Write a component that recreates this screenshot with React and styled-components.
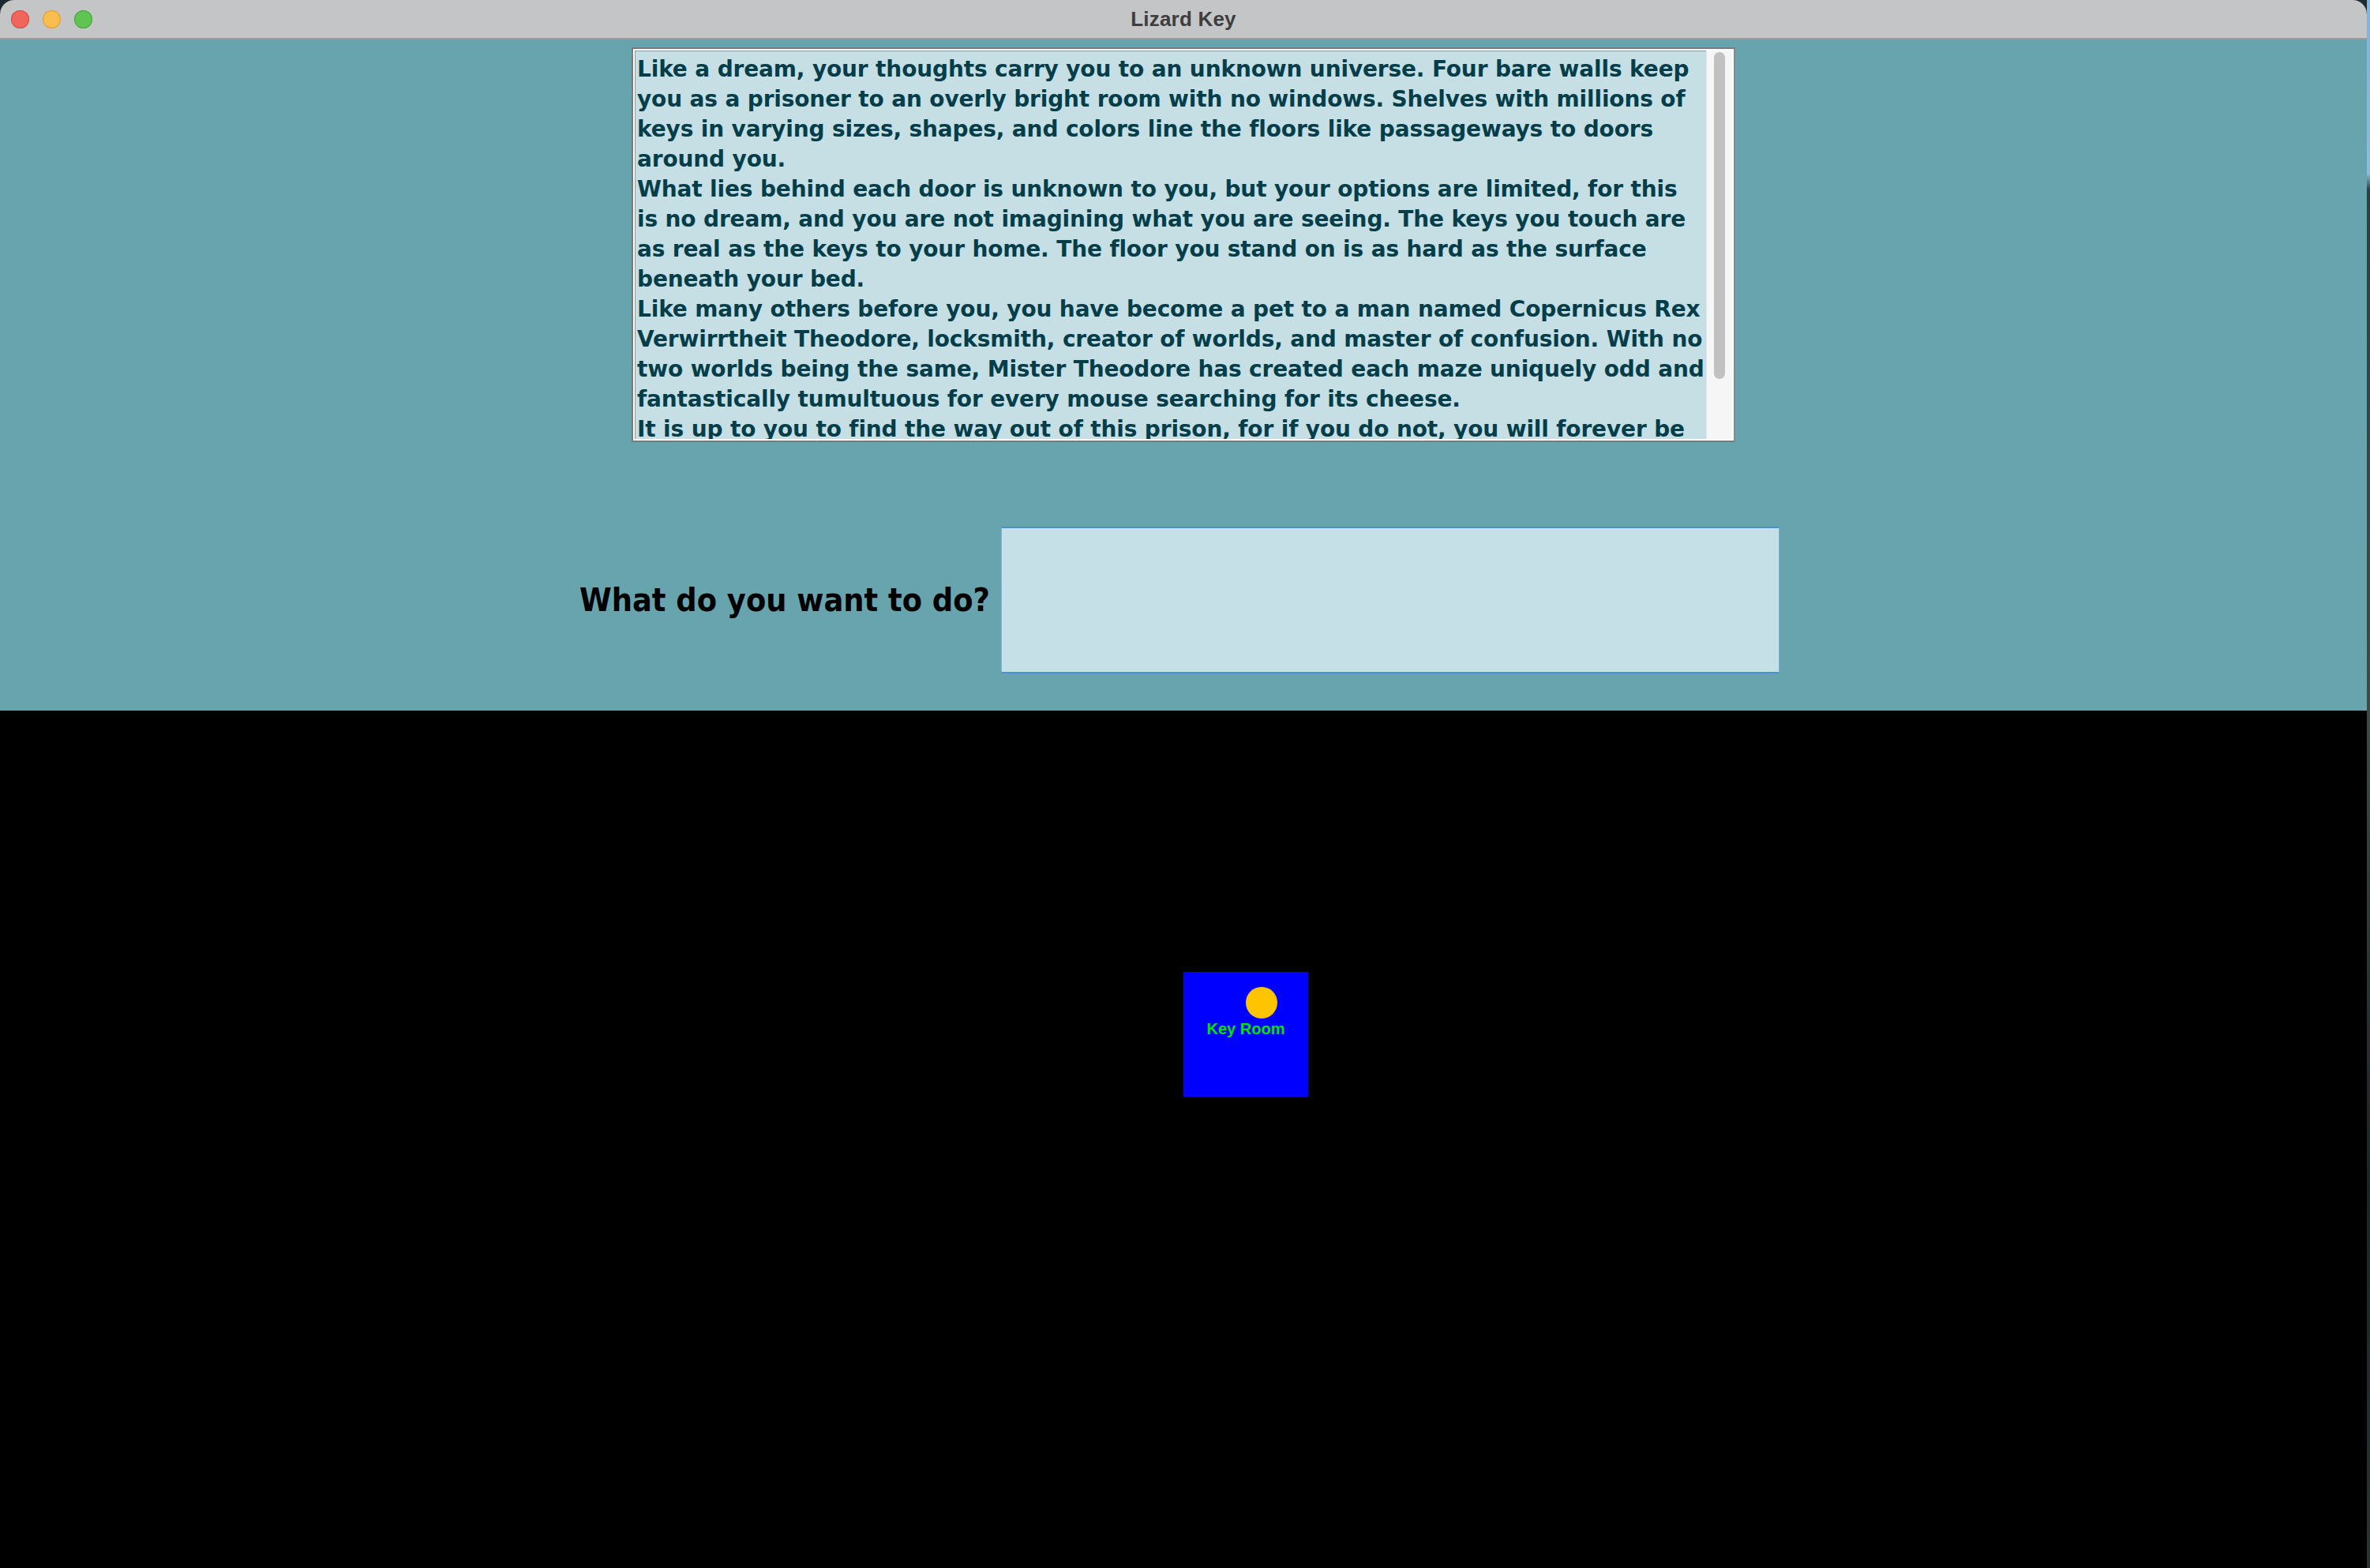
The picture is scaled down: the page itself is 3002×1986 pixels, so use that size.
import React from "react";
import styled, { createGlobalStyle } from "styled-components";

const GlobalStyle = createGlobalStyle`
  html, body { margin: 0; padding: 0; background: #1d2b30; }
  #root { width: 3002px; height: 1986px; }
`;

const Screen = styled.div`
  display: flex;
  width: 3002px;
  height: 1986px;
  overflow: hidden;
`;

const Window = styled.div`
  width: 2998px;
  height: 1986px;
  display: flex;
  flex-direction: column;
  border-top-left-radius: 18px;
  border-top-right-radius: 18px;
  overflow: hidden;
  background: #000;
`;

const Desktop = styled.div`
  flex: 1;
  background: linear-gradient(
    180deg,
    #7fb4e0 0px,
    #8bbbe0 220px,
    #2e3f44 240px,
    #3b4c46 900px,
    #1a2426 1500px,
    #2a3433 1986px
  );
`;

const TitleBar = styled.div`
  height: 48px;
  flex: none;
  background: #c4c5c7;
  border-bottom: 2px solid #9c9c9e;
  display: grid;
  grid-template-columns: 1fr auto 1fr;
  align-items: center;
  padding: 0 14px;
`;

const Lights = styled.div`
  display: flex;
  gap: 17px;
  align-items: center;
`;

const Light = styled.span`
  width: 23px;
  height: 23px;
  border-radius: 50%;
  background: ${(p) => p.$fill};
  box-shadow: inset 0 0 0 1px ${(p) => p.$edge};
`;

const Title = styled.div`
  font-family: "Liberation Sans", Arial, sans-serif;
  font-weight: 700;
  font-size: 26px;
  color: #3e3e3e;
  letter-spacing: 0.2px;
`;

const Console = styled.div`
  height: 850px;
  flex: none;
  background: #67a4ae;
  display: flex;
  flex-direction: column;
  align-items: center;
  padding-top: 10px;
  box-sizing: border-box;
`;

const StoryBox = styled.div`
  width: 1398px;
  height: 500px;
  box-sizing: border-box;
  border: 2px solid #7a7a7a;
  border-right-color: #8a8a8a;
  background: #ffffff;
  padding: 2px;
  display: flex;
`;

const StoryPane = styled.div`
  flex: 1;
  overflow: hidden;
  background: #c5dfe5;
  border-top: 1px solid #8a9a9e;
  border-left: 1px solid #8a9a9e;
  padding: 4px 0 0 2px;
  font-family: "DejaVu Sans", "Liberation Sans", sans-serif;
  font-weight: 700;
  font-size: 28px;
  letter-spacing: -0.15px;
  line-height: 38px;
  color: #023e4a;
`;

const StoryLine = styled.div`
  white-space: nowrap;
`;

const ScrollTrack = styled.div`
  width: 33px;
  flex: none;
  background: #f6f6f6;
  border-left: 1px solid #e4e4e4;
  display: flex;
  justify-content: center;
  padding-top: 2px;
  box-sizing: border-box;
`;

const ScrollThumb = styled.div`
  width: 14px;
  height: 414px;
  border-radius: 7px;
  background: #c1c1c1;
`;

const PromptRow = styled.div`
  margin-top: 107px;
  margin-right: 10px;
  display: flex;
  align-items: center;
  gap: 14px;
`;

const Prompt = styled.label`
  font-family: "DejaVu Sans Condensed", "DejaVu Sans", sans-serif;
  font-stretch: condensed;
  font-weight: 700;
  font-size: 41px;
  color: #000;
`;

const CommandInput = styled.div`
  width: 986px;
  height: 186px;
  box-sizing: border-box;
  background: #c5e0e6;
  border: 1px solid #7fb3da;
  border-top: 2px solid #4a8fcf;
  border-bottom: 2px solid #4a8fcf;
`;

const MapCanvas = styled.div`
  flex: 1;
  background: #000;
  position: relative;
`;

const RoomNode = styled.div`
  position: absolute;
  left: ${(p) => p.$x}px;
  top: ${(p) => p.$y}px;
  width: 158px;
  height: 158px;
  background: #0000ff;
`;

const RoomLabel = styled.div`
  position: absolute;
  left: 0;
  right: 0;
  top: 61px;
  text-align: center;
  font-family: "Liberation Sans", Arial, sans-serif;
  font-weight: 700;
  font-size: 20px;
  color: #00e000;
`;

const PlayerDot = styled.div`
  position: absolute;
  left: 79px;
  top: 19px;
  width: 40px;
  height: 40px;
  border-radius: 50%;
  background: #ffc400;
`;

const storyLines = [
  "Like a dream, your thoughts carry you to an unknown universe. Four bare walls keep",
  "you as a prisoner to an overly bright room with no windows. Shelves with millions of",
  "keys in varying sizes, shapes, and colors line the floors like passageways to doors",
  "around you.",
  "What lies behind each door is unknown to you, but your options are limited, for this",
  "is no dream, and you are not imagining what you are seeing. The keys you touch are",
  "as real as the keys to your home. The floor you stand on is as hard as the surface",
  "beneath your bed.",
  "Like many others before you, you have become a pet to a man named Copernicus Rex",
  "Verwirrtheit Theodore, locksmith, creator of worlds, and master of confusion. With no",
  "two worlds being the same, Mister Theodore has created each maze uniquely odd and",
  "fantastically tumultuous for every mouse searching for its cheese.",
  "It is up to you to find the way out of this prison, for if you do not, you will forever be",
  "trapped here.",
];

export default function App() {
  return (
    <>
      <GlobalStyle />
      <Screen>
        <Window>
          <TitleBar>
            <Lights>
              <Light $fill="#f0655c" $edge="#d94f46" />
              <Light $fill="#f9bd4d" $edge="#dca03a" />
              <Light $fill="#60c453" $edge="#4aa83e" />
            </Lights>
            <Title>Lizard Key</Title>
            <span />
          </TitleBar>
          <Console>
            <StoryBox>
              <StoryPane>
                {storyLines.map((l, i) => (
                  <StoryLine key={i}>{l}</StoryLine>
                ))}
              </StoryPane>
              <ScrollTrack>
                <ScrollThumb />
              </ScrollTrack>
            </StoryBox>
            <PromptRow>
              <Prompt>What do you want to do?</Prompt>
              <CommandInput />
            </PromptRow>
          </Console>
          <MapCanvas>
            <RoomNode $x={1499} $y={331}>
              <PlayerDot />
              <RoomLabel>Key Room</RoomLabel>
            </RoomNode>
          </MapCanvas>
        </Window>
        <Desktop />
      </Screen>
    </>
  );
}
